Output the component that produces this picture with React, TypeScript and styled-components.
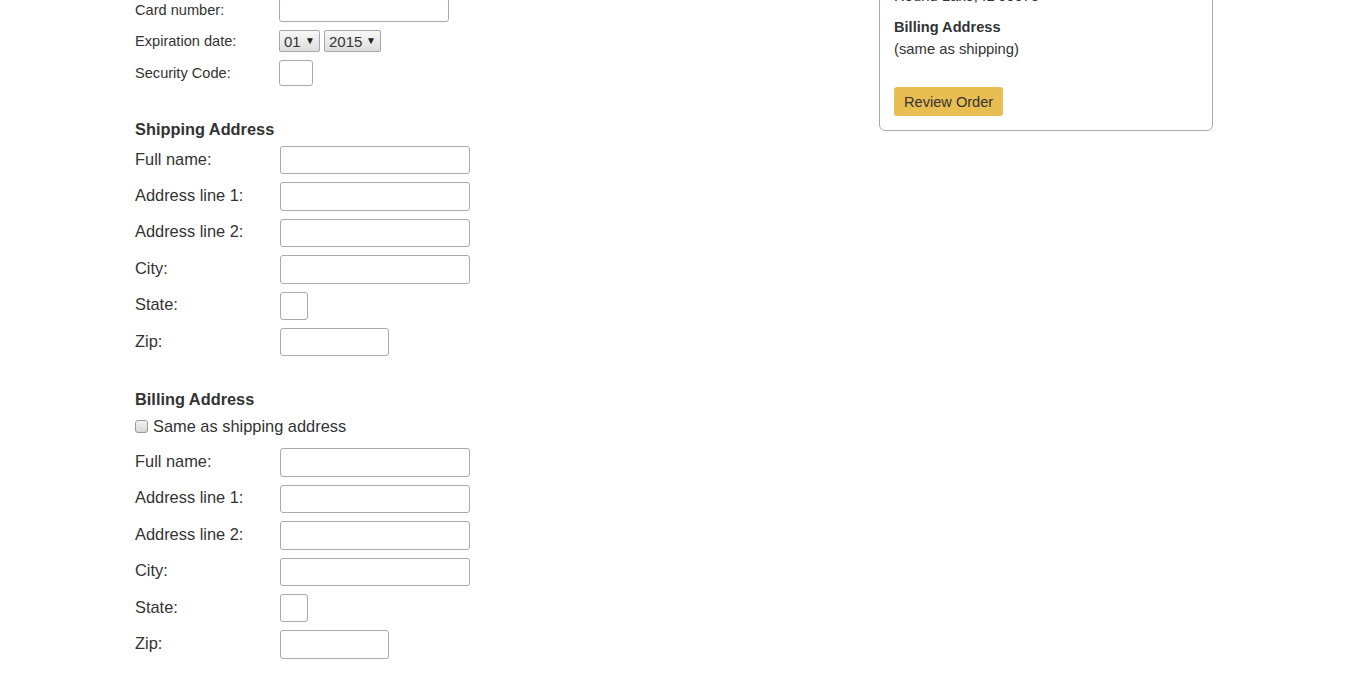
import styled, { createGlobalStyle } from "styled-components"

const GlobalStyle = createGlobalStyle`
  body {
    margin: 0;
    background: #fff;
    color: #333;
    font-family: "Liberation Sans", Arial, Helvetica, sans-serif;
  }
`

const Page = styled.div`
  display: flex;
  align-items: flex-start;
  padding-left: 135px;
  margin-top: -97px;
`

const LeftCol = styled.div`
  width: 744px;
  padding-top: 68px;
`

const Heading = styled.div<{ $top?: number; $bottom?: number }>`
  font-size: 16.35px;
  font-weight: bold;
  line-height: 20px;
  margin-top: ${(p) => p.$top ?? 0}px;
  margin-bottom: ${(p) => p.$bottom ?? 6}px;
`

const Rows = styled.div<{ $gap: number }>`
  display: flex;
  flex-direction: column;
  gap: ${(p) => p.$gap}px;
`

const Row = styled.div<{ $small?: boolean }>`
  display: flex;
  align-items: center;
  font-size: ${(p) => (p.$small ? 14.6 : 16.4)}px;
`

const Label = styled.label<{ $w: number; $lift?: number }>`
  width: ${(p) => p.$w}px;
  flex-shrink: 0;
  padding-bottom: ${(p) => p.$lift ?? 0}px;
`

const Input = styled.input<{ $w: number; $h: number }>`
  box-sizing: border-box;
  width: ${(p) => p.$w}px;
  height: ${(p) => p.$h}px;
  border: 1px solid #a9a9a9;
  border-radius: 3px;
  background: #fff;
  padding: 0 4px;
  margin: 0;
  font: inherit;
`

const SelectWrap = styled.span`
  position: relative;
  display: inline-block;
  margin-right: 4px;
`

const Select = styled.select<{ $w: number }>`
  appearance: none;
  box-sizing: border-box;
  width: ${(p) => p.$w}px;
  height: 22px;
  margin: 0;
  padding: 0 0 0 4px;
  border: 1px solid #a6a6a6;
  border-radius: 2px;
  background: linear-gradient(#f8f8f8, #dddddd);
  color: #333;
  font-family: "Liberation Sans", Arial, sans-serif;
  font-size: 15px;
`

const Arrow = styled.span`
  position: absolute;
  right: 5px;
  top: 5px;
  font-size: 10px;
  line-height: 12px;
  color: #222;
  pointer-events: none;
`

const CheckRow = styled.label`
  display: flex;
  align-items: center;
  height: 22px;
  font-size: 16.4px;
  margin-top: 1px;
  margin-bottom: 11px;
`

const Check = styled.input`
  appearance: none;
  box-sizing: border-box;
  width: 13px;
  height: 13px;
  margin: 0 5px 0 0;
  border: 1px solid #9a9a9a;
  border-radius: 3px;
  background: linear-gradient(#f4f4f4, #d6d6d6);
`

const Summary = styled.div`
  box-sizing: border-box;
  width: 334px;
  border: 1px solid #aaa;
  border-radius: 6px;
  padding: 15px 14px 14px;
  font-size: 14.8px;
  line-height: 22px;
`

const SummaryHeading = styled.div<{ $top?: number }>`
  font-weight: bold;
  font-size: 14.6px;
  margin-top: ${(p) => p.$top ?? 0}px;
`

const ReviewButton = styled.button`
  margin-top: 27px;
  height: 29px;
  padding: 0 10px;
  border: none;
  border-radius: 3px;
  background: #e8bd52;
  color: #333;
  font-family: "Liberation Sans", Arial, sans-serif;
  font-size: 14.6px;
  display: block;
`

function AddressFields() {
  return (
    <Rows $gap={8}>
      <Row><Label $w={145} $lift={2}>Full name:</Label><Input $w={190} $h={28.4} /></Row>
      <Row><Label $w={145} $lift={2}>Address line 1:</Label><Input $w={190} $h={28.4} /></Row>
      <Row><Label $w={145} $lift={2}>Address line 2:</Label><Input $w={190} $h={28.4} /></Row>
      <Row><Label $w={145} $lift={2}>City:</Label><Input $w={190} $h={28.4} /></Row>
      <Row><Label $w={145} $lift={2}>State:</Label><Input $w={28} $h={28.4} /></Row>
      <Row><Label $w={145} $lift={2}>Zip:</Label><Input $w={109} $h={28.4} /></Row>
    </Rows>
  )
}

export default function App() {
  return (
    <>
      <GlobalStyle />
      <Page>
        <LeftCol>
          <Heading $bottom={7}>Payment</Heading>
          <Rows $gap={8}>
            <Row $small><Label $w={144}>Card number:</Label><Input $w={170} $h={24} /></Row>
            <Row $small>
              <Label $w={144}>Expiration date:</Label>
              <SelectWrap>
                <Select $w={41} defaultValue="01">
                  <option>01</option>
                  <option>02</option>
                  <option>03</option>
                </Select>
                <Arrow>▼</Arrow>
              </SelectWrap>
              <SelectWrap>
                <Select $w={57} defaultValue="2015">
                  <option>2015</option>
                  <option>2016</option>
                  <option>2017</option>
                </Select>
                <Arrow>▼</Arrow>
              </SelectWrap>
            </Row>
            <Row $small><Label $w={144}>Security Code:</Label><Input $w={34} $h={26} /></Row>
          </Rows>

          <Heading $top={33} $bottom={7}>Shipping Address</Heading>
          <AddressFields />

          <Heading $top={33}>Billing Address</Heading>
          <CheckRow>
            <Check type="checkbox" />
            Same as shipping address
          </CheckRow>
          <AddressFields />
        </LeftCol>

        <Summary>
          <SummaryHeading>Shipping Address</SummaryHeading>
          <div>John Smith</div>
          <div>123 Main Street</div>
          <div>Round Lake, IL 60073</div>
          <SummaryHeading $top={9}>Billing Address</SummaryHeading>
          <div>(same as shipping)</div>
          <ReviewButton>Review Order</ReviewButton>
        </Summary>
      </Page>
    </>
  )
}
